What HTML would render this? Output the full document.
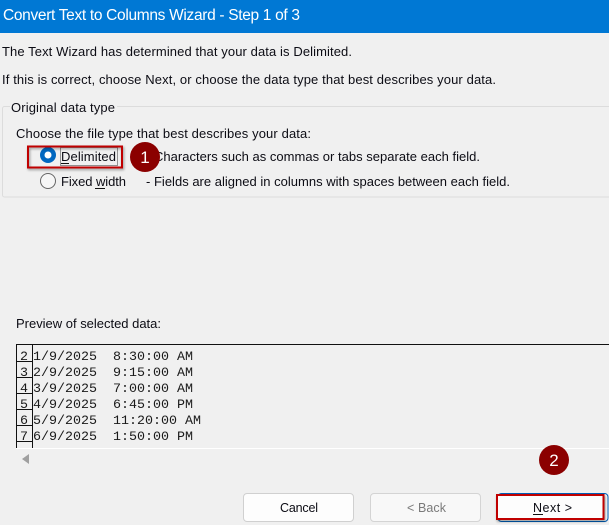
<!DOCTYPE html>
<html lang="en">
<head>
<meta charset="utf-8">
<title>Convert Text to Columns Wizard</title>
<style>
html,body{margin:0;padding:0;background:#f0f0f0;width:609px;height:525px;overflow:hidden}
svg{display:block}
text{font-family:"Liberation Sans",sans-serif;font-size:13px;fill:#0c0c14;white-space:pre}
.m{font-family:"Liberation Mono",monospace;font-size:13.33px;fill:#1a1a1a}
</style>
</head>
<body>
<svg width="609" height="525" viewBox="0 0 609 525" xmlns="http://www.w3.org/2000/svg">
<defs>
<filter id="s" x="-10%" y="-20%" width="120%" height="150%"><feDropShadow dx="1" dy="1.5" stdDeviation="1.2" flood-color="#000" flood-opacity=".4"/></filter>
</defs>
<rect width="609" height="525" fill="#f0f0f0"/>
<rect width="609" height="33" fill="#0078d4"/>
<text x="3" y="20" textLength="297" style="font-size:15.5px;fill:#fff">Convert Text to Columns Wizard - Step 1 of 3</text>

<text x="2" y="56" textLength="350">The Text Wizard has determined that your data is Delimited.</text>
<text x="2" y="84" textLength="494">If this is correct, choose Next, or choose the data type that best describes your data.</text>

<path d="M10 106.500H4.500a2 2 0 0 0-2 2V195a2 2 0 0 0 2 2H609M117 106.500H609" fill="none" stroke="#dcdcdc" stroke-width="1"/>
<text x="11" y="112" textLength="104">Original data type</text>
<text x="16" y="138" textLength="295">Choose the file type that best describes your data:</text>

<text x="61" y="161" textLength="55">Delimited</text>
<rect x="60.500" y="147.500" width="57" height="18" fill="none" stroke="#333" stroke-width="1" stroke-dasharray="1 1"/>
<line x1="61" y1="163.500" x2="69" y2="163.500" stroke="#111"/>
<text x="146" y="161" textLength="334">- Characters such as commas or tabs separate each field.</text>

<text x="61" y="186" textLength="65">Fixed width</text>
<line x1="95" y1="188.500" x2="105" y2="188.500" stroke="#111"/>
<text x="146" y="186" textLength="364">- Fields are aligned in columns with spaces between each field.</text>

<circle cx="48" cy="155" r="8" fill="#0067c0"/>
<circle cx="48" cy="155" r="3.500" fill="#fff"/>
<circle cx="48" cy="181" r="7.500" fill="#f6f6f6" stroke="#666" stroke-width="1"/>

<rect x="28" y="146.500" width="94" height="21" fill="none" stroke="#c00000" stroke-width="2" filter="url(#s)"/>
<circle cx="145" cy="157" r="15" fill="#8b0000"/>
<text x="145" y="163" text-anchor="middle" style="font-size:17px;fill:#fff">1</text>

<text x="16" y="328" textLength="145">Preview of selected data:</text>

<rect x="16" y="448" width="593" height="1" fill="#fff"/>
<path d="M16 344.500H609M16.500 344V448M32.500 344V448M16 361.500H33M16 377.500H33M16 393.500H33M16 409.500H33M16 425.500H33M16 441.500H33" fill="none" stroke="#111" stroke-width="1"/>

<text class="m" x="20" y="360">2</text><text class="m" x="33" y="360">1/9/2025  8:30:00 AM</text>
<text class="m" x="20" y="376">3</text><text class="m" x="33" y="376">2/9/2025  9:15:00 AM</text>
<text class="m" x="20" y="392">4</text><text class="m" x="33" y="392">3/9/2025  7:00:00 AM</text>
<text class="m" x="20" y="408">5</text><text class="m" x="33" y="408">4/9/2025  6:45:00 PM</text>
<text class="m" x="20" y="424">6</text><text class="m" x="33" y="424">5/9/2025  11:20:00 AM</text>
<text class="m" x="20" y="440">7</text><text class="m" x="33" y="440">6/9/2025  1:50:00 PM</text>

<path d="M29 454V464L22 459Z" fill="#a0a0a0"/>

<circle cx="554" cy="460" r="15" fill="#8b0000"/>
<text x="554" y="466" text-anchor="middle" style="font-size:17px;fill:#fff">2</text>

<rect x="243.500" y="493.500" width="110" height="28" rx="3.500" fill="#fdfdfd" stroke="#d0d0d0"/>
<text x="280" y="512" textLength="38" style="font-size:12.5px">Cancel</text>

<rect x="370.500" y="493.500" width="110" height="28" rx="3.500" fill="#f8f8f8" stroke="#d4d4d4"/>
<text x="407" y="512" textLength="39" style="fill:#7a7a7a;font-size:12.5px">&lt; Back</text>

<rect x="498" y="493.500" width="110" height="28" rx="3.500" fill="#fdfdfd" stroke="#005fb8" stroke-width="1"/>
<rect x="497" y="495" width="106.500" height="24" fill="#fdfdfd" stroke="#c00000" stroke-width="2" filter="url(#s)"/>
<text x="533" y="512" textLength="39" style="font-size:12.5px">Next &gt;</text>
<line x1="533" y1="514.500" x2="543" y2="514.500" stroke="#111"/>
</svg>
</body>
</html>
